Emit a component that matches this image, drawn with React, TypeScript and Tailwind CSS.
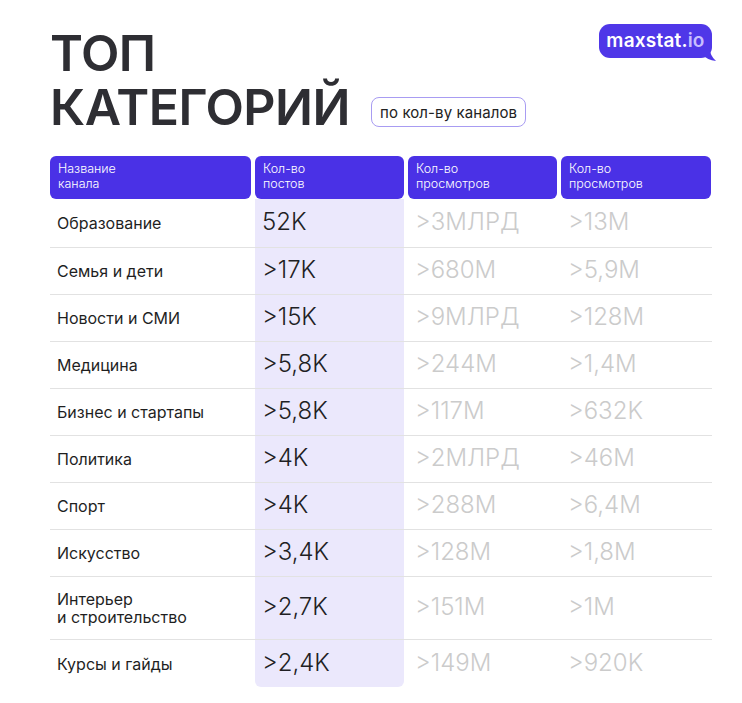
import React from "react";

const rows: { name: React.ReactNode; a: string; b: string; c: string; tall?: boolean }[] = [
  { name: "Образование", a: "52K", b: ">3МЛРД", c: ">13M" },
  { name: "Семья и дети", a: ">17K", b: ">680M", c: ">5,9M" },
  { name: "Новости и СМИ", a: ">15K", b: ">9МЛРД", c: ">128M" },
  { name: "Медицина", a: ">5,8K", b: ">244M", c: ">1,4M" },
  { name: "Бизнес и стартапы", a: ">5,8K", b: ">117M", c: ">632K" },
  { name: "Политика", a: ">4K", b: ">2МЛРД", c: ">46M" },
  { name: "Спорт", a: ">4K", b: ">288M", c: ">6,4M" },
  { name: "Искусство", a: ">3,4K", b: ">128M", c: ">1,8M" },
  {
    name: (
      <>
        Интерьер
        <br />и строительство
      </>
    ),
    a: ">2,7K",
    b: ">151M",
    c: ">1M",
    tall: true,
  },
  { name: "Курсы и гайды", a: ">2,4K", b: ">149M", c: ">920K" },
];

const grid = "grid grid-cols-[201px_149px_149px_150px] gap-x-[4px]";

export default function App() {
  return (
    <div className="w-[742px] h-[703px] bg-white font-['Inter',sans-serif] text-[#1d1d1f] overflow-hidden">
      <div className="flex justify-between pl-[50px] pr-[30px] pt-[26px]">
        <div className="font-semibold text-[#2e2e33] text-[50px] leading-[54px] tracking-[-0.5px]">
          <div>ТОП</div>
          <div className="flex items-end">
            <span>КАТЕГОРИЙ</span>
            <span className="ml-[21px] mb-[7px] border border-[#a89cf2] rounded-[8px] px-[8px] h-[30px] flex items-center text-[15px] leading-none font-normal tracking-[0.1px] text-[#222]">
              по кол-ву каналов
            </span>
          </div>
        </div>
        <div className="relative -mt-[2px] h-[34px]">
          <div className="bg-[#4f37e8] rounded-[11px] h-[34px] w-[113px] flex items-center justify-center text-[19px] font-semibold text-white tracking-[0.2px]">
            maxstat.<span className="text-[#c7bdff]">io</span>
          </div>
          <svg className="absolute right-[-5px] top-[22px]" width="14" height="16" viewBox="0 0 14 16">
            <path d="M0 0 L6 0 Q7 10 13 15 Q4 14 0 9 Z" fill="#4f37e8" />
          </svg>
        </div>
      </div>

      <div className="ml-[50px] mt-[22px] w-[662px]">
        <div className={`${grid} h-[43px]`}>
          {[
            ["Название", "канала"],
            ["Кол-во", "постов"],
            ["Кол-во", "просмотров"],
            ["Кол-во", "просмотров"],
          ].map((h, i) => (
            <div
              key={i}
              className="bg-[#4a31e6] rounded-[6px] text-white text-[12.5px] leading-[15px] font-light pl-[8px] pt-[5px]"
            >
              {h[0]}
              <br />
              {h[1]}
            </div>
          ))}
        </div>
        {rows.map((r, i) => {
          const last = i === rows.length - 1;
          const h = i === 0 ? "h-[49px]" : r.tall ? "h-[63px]" : "h-[47px]";
          return (
            <div key={i} className={`${grid} ${h} ${last ? "" : "border-b border-[#e2e2e2]"}`}>
              <div className="flex items-center pl-[7px] text-[16px] leading-[18px] text-[#1f1f1f]">{r.name}</div>
              <div
                className={`bg-[#ebe8fc] flex items-center pl-[7px] pb-[2px] text-[24px] font-light text-[#1f1f24] ${
                  last ? "rounded-b-[6px]" : ""
                }`}
              >
                {r.a}
              </div>
              <div className="flex items-center pl-[7px] pb-[2px] text-[24px] font-light text-[#cbcbcb]">{r.b}</div>
              <div className="flex items-center pl-[7px] pb-[2px] text-[24px] font-light text-[#cbcbcb]">{r.c}</div>
            </div>
          );
        })}
      </div>
    </div>
  );
}
